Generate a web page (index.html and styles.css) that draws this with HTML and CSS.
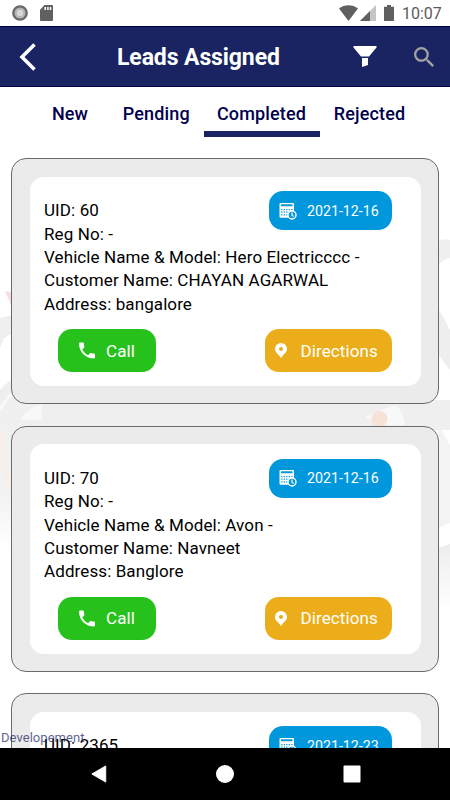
FILE: index.html
```html
<!DOCTYPE html>
<html lang="en">
<head>
<meta charset="utf-8">
<title>Leads Assigned</title>
<link rel="stylesheet" href="styles.css">
</head>
<body>
<svg width="0" height="0" class="defs">
  <symbol id="cal" viewBox="0 0 18 18">
    <path fill="#fff" fill-rule="evenodd" d="M1.500 1h12.500a1 1 0 0 1 1 1v8.200a4.300 4.300 0 0 0-5.100 5.600H1.500a1 1 0 0 1-1-1V2a1 1 0 0 1 1-1zM2 2.300v2h11.500v-2z"/>
    <path stroke="#0097dd" stroke-width="1.300" stroke-dasharray="1.300 1.200" d="M2.200 7.600h11.800M2.200 10.200h9M2.200 12.800h7"/>
    <circle cx="13" cy="13" r="4" fill="#0097dd" stroke="#fff" stroke-width="1.400"/>
    <path d="M13 10.500v2.800l1.600 1.200" fill="none" stroke="#fff" stroke-width="1.200"/>
  </symbol>
  <symbol id="phone" viewBox="3 3 18 18"><path fill="#fff" d="M20 15.500c-1.250 0-2.450-.2-3.570-.57a1 1 0 0 0-1.020.24l-2.200 2.200a15.100 15.100 0 0 1-6.590-6.590l2.200-2.210a1 1 0 0 0 .25-1.010A11.400 11.400 0 0 1 8.500 4c0-.55-.45-1-1-1H4c-.55 0-1 .45-1 1 0 9.390 7.610 17 17 17 .55 0 1-.45 1-1v-3.500c0-.55-.45-1-1-1z"/></symbol>
  <symbol id="pin" viewBox="0 0 12 15"><path fill="#fff" fill-rule="evenodd" d="M6 0a6 6 0 0 0-6 6c0 3.400 3 5 4.700 7.200L6 15l1.300-1.800C9 11 12 9.400 12 6a6 6 0 0 0-6-6zm0 4a2 2 0 1 1 0 4 2 2 0 0 1 0-4z"/></symbol>
</svg>
<div class="screen">
  <header class="status">
    <svg class="record" viewBox="0 0 16 16"><circle cx="8" cy="8" r="6.700" fill="#b5b5b5" stroke="#686868" stroke-width="2.300"/><circle cx="8" cy="8" r="3.300" fill="#d8d8d8"/></svg>
    <svg class="sd" viewBox="0 0 13 16"><path fill="#606060" d="M4.500 0H12a1 1 0 0 1 1 1v14a1 1 0 0 1-1 1H1a1 1 0 0 1-1-1V4.700z"/><path stroke="#fff" stroke-width="1.500" d="M5.200 2v3M7.900 2v3M10.500 2v3"/></svg>
    <svg class="wifi" viewBox="0 0 19 16"><path fill="#606060" d="M0 3.500C5-1 14-1 19 3.500L9.500 16z"/></svg>
    <svg class="signal" viewBox="0 0 16 16"><path fill="#c6c6c6" d="M16 0v16H0z"/><path fill="#606060" d="M10 6v10H0z"/></svg>
    <svg class="battery" viewBox="0 0 10 16"><path fill="#606060" d="M3 0h4v1.700h3V16H0V1.700h3z"/></svg>
    <span class="clock">10:07</span>
  </header>
  <nav class="bar">
    <svg class="back" viewBox="0 0 18 28"><path d="M15.500 1.500L3 14l12.500 12.500" fill="none" stroke="#fff" stroke-width="3.600"/></svg>
    <h1>Leads Assigned</h1>
    <svg class="funnel" viewBox="0 0 24 21"><path fill="#fff" d="M.5 0h23v1.500L16 10.500H8L.5 1.500zM9 12h6v7l-6 2z"/></svg>
    <svg class="search" viewBox="3 3 17.500 17.500"><path fill="#a3a3a3" d="M15.500 14h-.79l-.28-.27A6.470 6.470 0 0 0 16 9.500 6.500 6.500 0 1 0 9.500 16c1.610 0 3.090-.59 4.230-1.570l.27.28v.79l5 4.990L20.490 19zm-6 0a4.500 4.500 0 1 1 0-9 4.500 4.500 0 0 1 0 9z"/></svg>
  </nav>
  <div class="tabs"><span class="new">New</span><span class="pending">Pending</span><span class="completed">Completed</span><span class="rejected">Rejected</span></div>
  <main class="list">
    <svg class="backdrop" viewBox="0 0 450 400">
      <defs>
        <linearGradient id="fadeL" x2="0" y2="1"><stop offset="0" stop-color="#eee"/><stop offset=".7" stop-color="#f3f3f3"/><stop offset="1" stop-color="#fff"/></linearGradient>
        <linearGradient id="fadeR" x2="0" y2="1"><stop offset="0" stop-color="#ededed"/><stop offset="1" stop-color="#fff"/></linearGradient>
      </defs>
      <path fill="#f0f0f0" d="M438 22q4-4 12-2v18q-8 2-12 7z"/>
      <path fill="#f8dede" d="M5 71l6 1v13z"/>
      <path fill="#efefef" d="M0 98l12-3v18l-8 5-4 10z"/>
      <path fill="url(#fadeL)" d="M0 170Q10 158 24 154H60V330H0z"/>
      <path fill="#efefef" d="M30 180H450V210H30z"/>
      <path fill="#f8f8f8" d="M20 200q10-14 22-16v16zM395 185q9 6 10 20h-25l-15-8z"/>
      <circle cx="379.500" cy="199" r="8" fill="#f6e3d5"/>
      <path fill="none" stroke="#f8f8f8" stroke-width="3" d="M0 190Q10 170 30 162"/>
      <path fill="none" stroke="#f8efea" stroke-width="5" d="M2 210q0 40 10 64"/>
      <path fill="#eee" d="M438 88q6 10 12 22v40l-12-16z"/>
      <path fill="#f3f3f3" d="M438 205l12 20v78l-12 5z"/>
      <path fill="url(#fadeR)" d="M438 328l12-4v68h-12z"/>
    </svg>
    <article class="card"><div class="inner">
      <div class="date"><svg><use href="#cal"/></svg><span>2021-12-16</span></div>
      <p>UID: 60<br>Reg No: -<br>Vehicle Name &amp; Model: Hero Electricccc -<br>Customer Name: CHAYAN AGARWAL<br>Address: bangalore</p>
      <div class="actions"><a class="call"><svg><use href="#phone"/></svg><span>Call</span></a><a class="directions"><svg><use href="#pin"/></svg><span>Directions</span></a></div>
    </div></article>
    <article class="card"><div class="inner">
      <div class="date"><svg><use href="#cal"/></svg><span>2021-12-16</span></div>
      <p>UID: 70<br>Reg No: -<br>Vehicle Name &amp; Model: Avon -<br>Customer Name: Navneet<br>Address: Banglore</p>
      <div class="actions"><a class="call"><svg><use href="#phone"/></svg><span>Call</span></a><a class="directions"><svg><use href="#pin"/></svg><span>Directions</span></a></div>
    </div></article>
    <article class="card"><div class="inner">
      <div class="date"><svg><use href="#cal"/></svg><span>2021-12-23</span></div>
      <p>UID: 2365</p>
    </div></article>
    <span class="env">Developement</span>
  </main>
  <footer class="nav">
    <svg viewBox="0 0 18 20"><path fill="#fff" d="M16.500 1v18L1 10z" stroke="#fff" stroke-linejoin="round"/></svg>
    <svg viewBox="0 0 18 18"><circle cx="9" cy="9" r="9" fill="#fff"/></svg>
    <svg viewBox="0 0 18 18"><rect x=".5" y=".5" width="17" height="17" rx="1" fill="#fff"/></svg>
  </footer>
</div>
</body>
</html>
```

FILE: styles.css
```css
* { box-sizing: border-box; }
body { margin: 0; background: #fff; font-family: Roboto, "Liberation Sans", sans-serif; }
.defs { position: absolute; }
.screen { width: 450px; height: 800px; display: flex; flex-direction: column; overflow: hidden; }
svg { display: block; flex: none; }

.status { height: 26px; flex: none; display: flex; align-items: flex-start; padding: 5px 9px 0 12px; }
.record { width: 16px; height: 16px; }
.sd { width: 13px; height: 16px; margin-left: 12px; }
.wifi { width: 19px; height: 16px; margin-left: 285.500px; }
.signal { width: 16px; height: 16px; margin-left: 2.500px; }
.battery { width: 10px; height: 16px; margin-left: 8px; }
.clock { margin-left: 8px; font-size: 16px; line-height: 18px; color: #5a5a5a; white-space: nowrap; }

.bar { height: 61px; flex: none; display: flex; align-items: center; background: #1a2462; border-top: 1px solid #000048; border-bottom: 1px solid #000048; padding-left: 19px; }
.back { width: 18px; height: 28px; }
.bar h1 { margin: 3px 0 0 80px; width: 165px; font-size: 23px; font-weight: 700; line-height: 30px; letter-spacing: -.1px; color: #fff; white-space: nowrap; }
.funnel { width: 24px; height: 21px; margin-left: 71px; }
.search { width: 20px; height: 20px; margin-left: 36.500px; }

.tabs { height: 50px; flex: none; display: flex; font-size: 18px; font-weight: 500; line-height: 53px; letter-spacing: .15px; color: #00004d; }
.tabs span { text-align: center; white-space: nowrap; }
.new { margin-left: 34px; width: 72px; }
.pending { width: 98px; padding-left: 2.500px; }
.completed { width: 116px; padding-right: 1px; border-bottom: 6px solid #1a2462; }
.rejected { width: 98px; padding-left: 1px; }

.list { position: relative; flex: 1; min-height: 0; overflow: hidden; padding: 21px 11px 0 11px; }
.backdrop { position: absolute; left: 0; top: 83px; width: 450px; height: 400px; }
.card { position: relative; height: 246px; margin-bottom: 21.600px; padding: 17.500px; background: #ebebeb; border: 1px solid #6a6a6a; border-radius: 15px; }
.inner { position: relative; height: 209.500px; background: #fff; border-radius: 14px; padding: 22.700px 28.500px 0 14.500px; }
.inner p { margin: 0; font-size: 17px; line-height: 23.400px; letter-spacing: .1px; color: #000; white-space: nowrap; }
.date { position: absolute; right: 28.500px; top: 14.500px; width: 123px; height: 39px; border-radius: 14px; background: #0097dd; color: #fff; display: flex; align-items: center; padding-left: 10px; font-size: 14.200px; }
.date svg { width: 18px; height: 18px; margin-right: 10px; }
.actions { display: flex; justify-content: space-between; margin: 12.800px 0 0 14px; font-size: 17px; letter-spacing: .1px; }
.actions a { height: 43px; border-radius: 14px; color: #fff; display: flex; align-items: center; }
.call { width: 98px; background: #27c11c; padding-left: 21px; }
.call svg { width: 16px; height: 17px; margin-right: 11px; }
.directions { width: 127.500px; background: #ebae1a; padding-left: 10px; }
.directions svg { width: 12px; height: 15px; margin-right: 14px; }
.env { position: absolute; left: 1px; bottom: 2px; font-size: 13px; line-height: 16px; letter-spacing: .05px; color: #1a2462; opacity: .7; white-space: nowrap; }

.nav { height: 52px; flex: none; display: flex; align-items: center; justify-content: space-between; background: #000; padding: 0 89.500px; }
.nav svg { width: 18px; height: 18px; }
```
